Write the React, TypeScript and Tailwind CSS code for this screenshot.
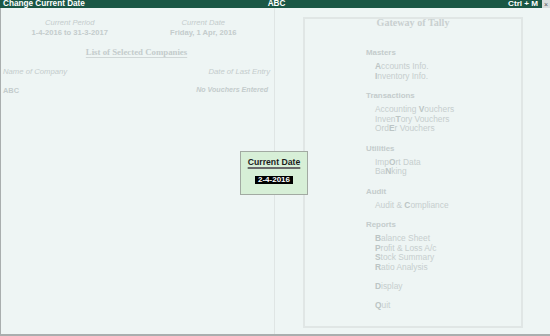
import React from "react";

const K = ({ c }: { c: string }) => <span className="font-bold text-[#bcc5c5]">{c}</span>;

const Item = ({ a, k, b }: { a?: string; k: string; b?: string }) => (
  <div className="h-[9.5px] leading-[9.5px] text-[8.4px] pl-[70px] whitespace-nowrap text-[#c6cece]">
    {a}
    <K c={k} />
    {b}
  </div>
);

const Label = ({ t, mt }: { t: string; mt?: boolean }) => (
  <div
    className={`h-[9.5px] leading-[9.5px] text-[7.9px] font-bold pl-[61px] mb-[4.5px] whitespace-nowrap text-[#c4cccc] ${
      mt ? "mt-[10px]" : ""
    }`}
  >
    {t}
  </div>
);

export default function App() {
  return (
    <div className="w-[550px] h-[336px] flex flex-col bg-[#eef5f4] relative overflow-hidden font-['Liberation_Sans',Arial,sans-serif]">
      {/* Title bar */}
      <div className="h-[8px] bg-[#1a5745] flex items-center text-white font-bold text-[8.2px] leading-[8px] whitespace-nowrap">
        <div className="flex-1 pl-[3px]">Change Current Date</div>
        <div className="w-[40px] text-center">ABC</div>
        <div className="flex-1 flex justify-end items-center">
          <span className="text-[8.1px]">Ctrl + M</span>
          <span className="ml-[4px] w-[8px] h-[8px] bg-[#d9dede] text-[#555] flex items-center justify-center text-[7px] leading-[7px] font-normal">
            ×
          </span>
        </div>
      </div>

      {/* Body */}
      <div className="flex-1 flex border-l border-b-2 border-[#a9aeae]">
        {/* Left panel */}
        <div className="w-[273px] pl-[2px] pr-[4px] text-[#c4cccc]">
          <div className="grid grid-cols-2 pt-[10.2px] text-[7.6px] leading-[9.5px]">
            <div className="text-center">
              <div className="italic">Current Period</div>
              <div className="font-bold">1-4-2016 to 31-3-2017</div>
            </div>
            <div className="text-center">
              <div className="italic">Current Date</div>
              <div className="font-bold">Friday, 1 Apr, 2016</div>
            </div>
          </div>
          <div className="mt-[9.6px] text-center h-[10px] leading-[10px] text-[8.8px] font-bold font-['Liberation_Serif','Times_New_Roman',serif] text-[#c4cccc]">
            <span className="underline underline-offset-[2px] decoration-[#d0d7d7]">List of Selected Companies</span>
          </div>
          <div className="mt-[10.2px] flex justify-between text-[7.7px] leading-[9.5px] italic">
            <span>Name of Company</span>
            <span>Date of Last Entry</span>
          </div>
          <div className="mt-[9.2px] flex justify-between text-[7.4px] leading-[9.5px] font-bold">
            <span>ABC</span>
            <span className="italic text-[7.1px] pr-[2px]">No Vouchers Entered</span>
          </div>
        </div>

        {/* Divider */}
        <div className="w-px bg-[#dfe5e4]" />

        {/* Right panel */}
        <div className="flex-1 pl-[28px] pr-[27px] pt-[9px] pb-[6px]">
          <div className="h-full border-2 border-[#e0e6e5] flex flex-col">
            <div className="-mt-[1px] h-[10px] leading-[10px] text-center text-[10.1px] font-bold font-['Liberation_Serif','Times_New_Roman',serif] text-[#c9d0d0]">
              Gateway of Tally
            </div>
            <div className="mt-[20.4px]">
              <Label t="Masters" />
              <Item k="A" b="ccounts Info." />
              <Item k="I" b="nventory Info." />
              <Label t="Transactions" mt />
              <Item a="Accounting " k="V" b="ouchers" />
              <Item a="Inven" k="T" b="ory Vouchers" />
              <Item a="Ord" k="E" b="r Vouchers" />
              <Label t="Utilities" mt />
              <Item a="Imp" k="O" b="rt Data" />
              <Item a="Ba" k="N" b="king" />
              <Label t="Audit" mt />
              <Item a="Audit & " k="C" b="ompliance" />
              <Label t="Reports" mt />
              <Item k="B" b="alance Sheet" />
              <Item k="P" b="rofit & Loss A/c" />
              <Item k="S" b="tock Summary" />
              <Item k="R" b="atio Analysis" />
              <div className="h-[9.5px]" />
              <Item k="D" b="isplay" />
              <div className="h-[9.5px]" />
              <Item k="Q" b="uit" />
            </div>
          </div>
        </div>
      </div>

      {/* Popup */}
      <div className="absolute left-[240px] top-[151px] w-[68px] h-[44px] bg-[#d7efd7] border border-[#a2aaa2] flex flex-col items-center">
        <div className="mt-[4.5px] h-[10px] leading-[10px] text-[8.7px] font-bold text-[#1b1b1b] whitespace-nowrap">
          <span className="underline decoration-2 underline-offset-[1.5px] decoration-[#6a6a6a]">Current Date</span>
        </div>
        <div className="mt-[9.3px] h-[8px] px-[2.5px] bg-black text-white font-bold text-[8px] leading-[8px] whitespace-nowrap">
          2-4-2016
        </div>
      </div>
    </div>
  );
}
